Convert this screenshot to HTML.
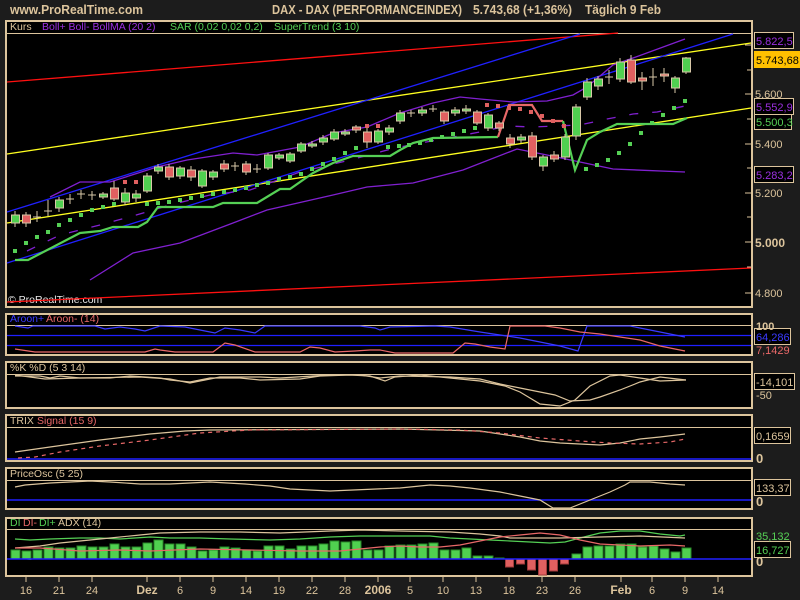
<!DOCTYPE html>
<html><head><meta charset="utf-8"><style>
html,body{margin:0;padding:0;background:#1c1c1c;}
svg{display:block;font-family:"Liberation Sans",sans-serif;}
</style></head><body>
<svg width="800" height="600" viewBox="0 0 800 600" xmlns="http://www.w3.org/2000/svg">
<rect width="800" height="600" fill="#1c1c1c"/>
<g fill="#dcc49c" font-weight="bold" font-size="13">
<text x="10" y="14" textLength="133" lengthAdjust="spacingAndGlyphs">www.ProRealTime.com</text>
<text x="272" y="14" textLength="190" lengthAdjust="spacingAndGlyphs">DAX - DAX (PERFORMANCEINDEX)</text>
<text x="473" y="14" textLength="99" lengthAdjust="spacingAndGlyphs">5.743,68 (+1,36%)</text>
<text x="585" y="14" textLength="76" lengthAdjust="spacingAndGlyphs">Täglich  9 Feb</text>
</g>
<!-- panels -->
<g fill="#000" stroke="#dcc49c" stroke-width="2">
<rect x="6" y="21" width="746" height="286"/>
<rect x="6" y="314" width="746" height="41"/>
<rect x="6" y="362" width="746" height="46"/>
<rect x="6" y="415" width="746" height="46"/>
<rect x="6" y="468" width="746" height="41"/>
<rect x="6" y="518" width="746" height="58"/>
</g>
<g stroke="#dcc49c" stroke-width="1">
<line x1="6" y1="33.5" x2="752" y2="33.5"/>
<line x1="6" y1="325.5" x2="752" y2="325.5"/>
<line x1="6" y1="374.5" x2="752" y2="374.5"/>
<line x1="6" y1="427.5" x2="752" y2="427.5"/>
<line x1="6" y1="480.5" x2="752" y2="480.5"/>
<line x1="6" y1="529.5" x2="752" y2="529.5"/>
</g>
<g font-size="10.5">
<text x="10" y="30" fill="#dcc49c">Kurs</text>
<text x="42" y="30" fill="#9b30e0">Boll+ Boll- BollMA (20 2)</text>
<text x="170" y="30" fill="#55d055">SAR (0,02 0,02 0,2)</text>
<text x="274" y="30" fill="#55d055">SuperTrend (3 10)</text>
<text x="10" y="322" fill="#3a3aff">Aroon+</text>
<text x="46" y="322" fill="#e86868">Aroon- (14)</text>
<text x="10" y="371" fill="#dcc49c">%K %D (5 3 14)</text>
<text x="10" y="424" fill="#dcc49c">TRIX</text>
<text x="37" y="424" fill="#e86868">Signal (15 9)</text>
<text x="10" y="477" fill="#dcc49c">PriceOsc (5 25)</text>
<text x="10" y="526" fill="#55d055">DI</text>
<text x="23" y="526" fill="#e86868">DI-</text>
<text x="39" y="526" fill="#55d055">DI+</text>
<text x="58" y="526" fill="#dcc49c">ADX (14)</text>
<text x="8" y="303" fill="#e8e8e8">© ProRealTime.com</text>
</g>
<!-- main chart lines -->
<g fill="none">
<line x1="7" y1="82" x2="618" y2="33" stroke="#ff1010" stroke-width="1.3"/>
<line x1="7" y1="302" x2="751" y2="268" stroke="#ff1010" stroke-width="1.3"/>
<line x1="7" y1="154" x2="751" y2="43" stroke="#ffff20" stroke-width="1.3"/>
<line x1="7" y1="223" x2="751" y2="108" stroke="#ffff20" stroke-width="1.3"/>
<line x1="7" y1="212" x2="580" y2="34" stroke="#2020ff" stroke-width="1.3"/>
<line x1="7" y1="263" x2="733" y2="34" stroke="#2020ff" stroke-width="1.3"/>
<polyline stroke="#8020d0" stroke-width="1.3" points="50,197 80,182 110,182 157,167 187,160 233,153 257,155 300,147 333,133 367,127 400,113 433,103 460,97 480,99 513,102 547,101 573,95 587,87 613,65 633,58 685,39"/>
<polyline stroke="#8020d0" stroke-width="1.3" points="90,280 133,253 180,243 233,223 267,210 333,195 367,187 390,185 413,183 463,170 517,149 547,155 580,162 613,169 685,172"/>
<polyline stroke="#8020d0" stroke-width="1.3" stroke-dasharray="9,14" points="27,251 60,235 100,225 133,216 170,205 210,195 250,190 300,172 350,160 395,148 437,140 480,132 507,126 533,127 580,125 607,119 633,114 657,112 685,106"/>
<polyline stroke="#55d055" stroke-width="2.2" points="15,260 28,260 80,233 100,231 113,227 138,227 147,222 158,207 213,207 223,203 257,203 280,189 290,189 313,173 333,163 353,156 390,156 400,150 413,143 433,138 498,137"/>
<polyline stroke="#e86868" stroke-width="2.2" points="498,137 509,105 532,105 542,121 563,121"/>
<polyline stroke="#55d055" stroke-width="2.2" points="563,121 575,170 587,140 600,132 617,124 673,124 687,118"/>
</g>
<!-- SAR -->
<g fill="#55d055">
<rect x="13" y="249" width="4" height="4"/><rect x="24" y="241" width="4" height="4"/><rect x="35" y="235" width="4" height="4"/><rect x="46" y="230" width="4" height="4"/><rect x="57" y="223" width="4" height="4"/><rect x="68" y="218" width="4" height="4"/><rect x="79" y="213" width="4" height="4"/><rect x="90" y="208" width="4" height="4"/><rect x="101" y="205" width="4" height="4"/><rect x="112" y="202" width="4" height="4"/>
<rect x="145" y="202" width="4" height="4"/><rect x="156" y="201" width="4" height="4"/><rect x="167" y="200" width="4" height="4"/><rect x="178" y="198" width="4" height="4"/><rect x="189" y="196" width="4" height="4"/><rect x="200" y="194" width="4" height="4"/><rect x="211" y="192" width="4" height="4"/><rect x="222" y="190" width="4" height="4"/><rect x="233" y="188" width="4" height="4"/><rect x="244" y="186" width="4" height="4"/><rect x="255" y="183" width="4" height="4"/><rect x="266" y="181" width="4" height="4"/><rect x="277" y="177" width="4" height="4"/><rect x="288" y="175" width="4" height="4"/><rect x="299" y="172" width="4" height="4"/><rect x="310" y="167" width="4" height="4"/><rect x="321" y="162" width="4" height="4"/><rect x="332" y="157" width="4" height="4"/><rect x="343" y="151" width="4" height="4"/><rect x="354" y="146" width="4" height="4"/>
<rect x="386" y="145" width="4" height="4"/><rect x="397" y="144" width="4" height="4"/><rect x="407" y="143" width="4" height="4"/><rect x="418" y="141" width="4" height="4"/><rect x="429" y="138" width="4" height="4"/><rect x="440" y="135" width="4" height="4"/><rect x="451" y="132" width="4" height="4"/><rect x="462" y="129" width="4" height="4"/><rect x="473" y="126" width="4" height="4"/>
<rect x="584" y="167" width="4" height="4"/><rect x="595" y="163" width="4" height="4"/><rect x="606" y="158" width="4" height="4"/><rect x="617" y="151" width="4" height="4"/><rect x="628" y="142" width="4" height="4"/><rect x="639" y="131" width="4" height="4"/><rect x="650" y="121" width="4" height="4"/><rect x="661" y="113" width="4" height="4"/><rect x="672" y="106" width="4" height="4"/><rect x="683" y="99" width="4" height="4"/>
</g>
<g fill="#e06060">
<rect x="123" y="180" width="4" height="4"/><rect x="134" y="180" width="4" height="4"/><rect x="365" y="124" width="4" height="4"/><rect x="376" y="124" width="4" height="4"/>
<rect x="485" y="103" width="4" height="4"/><rect x="496" y="104" width="4" height="4"/><rect x="507" y="106" width="4" height="4"/><rect x="518" y="107" width="4" height="4"/><rect x="529" y="110" width="4" height="4"/><rect x="540" y="114" width="4" height="4"/><rect x="551" y="119" width="4" height="4"/><rect x="562" y="124" width="4" height="4"/>
</g>
<!-- candles -->
<g stroke="#d8c8a8" stroke-width="1">
<path d="M15 211V227M26 212V227M37 211V222M48 200V216M59 197V212M70 194V204M81 190V199M92 191V200M103 192V199M114 181V201M125 188V205M136 190V202M147 173V193M158 164V174M169 164V180M180 166V179M191 166V181M202 169V188M213 170V180M224 160V172M235 162V171M246 161V175M257 164V173M268 153V170M279 153V160M290 152V163M301 142V153M312 141V148M323 135V145M334 129V141M345 129V136M356 125V133M367 128V148M378 129V144M389 125V135M400 110V124M411 110V117M422 107V116M433 105V112M444 110V124M455 107V116M466 105V114M477 110V125M488 113V131M499 121V131M510 134V148M521 134V143M532 132V160M543 155V171M554 151V162M565 134V160M576 104V140M587 78V100M598 76V90M609 70V84M620 58V82M631 55V84M642 72V90M653 68V86M664 68V82M675 76V93M686 57V74" fill="none"/>
<g fill="#50d050">
<rect x="11.5" y="215" width="8" height="8"/><rect x="55.5" y="200" width="8" height="8"/><rect x="99.5" y="194" width="8" height="3"/><rect x="121.5" y="193" width="8" height="9"/><rect x="132.5" y="194" width="8" height="4"/><rect x="143.5" y="176" width="8" height="15"/><rect x="154.5" y="167" width="8" height="4"/><rect x="176.5" y="168" width="8" height="8"/><rect x="198.5" y="171" width="8" height="15"/><rect x="209.5" y="172" width="8" height="5"/><rect x="264.5" y="155" width="8" height="13"/><rect x="275.5" y="155" width="8" height="3"/><rect x="286.5" y="154" width="8" height="7"/><rect x="297.5" y="144" width="8" height="7"/><rect x="308.5" y="144" width="8" height="2"/><rect x="319.5" y="138" width="8" height="4"/><rect x="330.5" y="132" width="8" height="7"/><rect x="341.5" y="132" width="8" height="2"/><rect x="374.5" y="131" width="8" height="11"/><rect x="385.5" y="128" width="8" height="4"/><rect x="396.5" y="113" width="8" height="8"/><rect x="418.5" y="110" width="8" height="3"/><rect x="451.5" y="110" width="8" height="3"/><rect x="462.5" y="109" width="8" height="2"/><rect x="484.5" y="115" width="8" height="13"/><rect x="517.5" y="137" width="8" height="3"/><rect x="539.5" y="157" width="8" height="9"/><rect x="561.5" y="137" width="8" height="20"/><rect x="572.5" y="107" width="8" height="29"/><rect x="583.5" y="82" width="8" height="15"/><rect x="594.5" y="79" width="8" height="7"/><rect x="616.5" y="62" width="8" height="17"/><rect x="671.5" y="78" width="8" height="10"/><rect x="682.5" y="58" width="8" height="14"/>
</g>
<g fill="#e06060">
<rect x="22.5" y="215" width="8" height="8"/><rect x="110.5" y="188" width="8" height="11"/><rect x="165.5" y="167" width="8" height="10"/><rect x="187.5" y="170" width="8" height="7"/><rect x="220.5" y="164" width="8" height="5"/><rect x="242.5" y="164" width="8" height="8"/><rect x="352.5" y="127" width="8" height="3"/><rect x="363.5" y="132" width="8" height="10"/><rect x="440.5" y="112" width="8" height="9"/><rect x="473.5" y="112" width="8" height="11"/><rect x="495.5" y="123" width="8" height="5"/><rect x="506.5" y="138" width="8" height="6"/><rect x="528.5" y="136" width="8" height="21"/><rect x="550.5" y="155" width="8" height="4"/><rect x="627.5" y="60" width="8" height="22"/><rect x="638.5" y="78" width="8" height="3"/><rect x="660.5" y="74" width="8" height="2"/>
</g>
<path d="M33 217H41M44 211H52M66 199H74M77 194H85M88 195H96M231 166H239M253 169H261M407 113H415M429 109H437M605 77H613M649 77H657" fill="none"/>
</g>
<!-- right axis main -->
<g stroke="#dcc49c"><path d="M745 45H751M747 70H751M745 94H751M747 119H751M745 144H751M747 168H751M745 193H751M747 217H751M745 242H751M747 267H751M745 293H751"/></g>
<g font-size="11" fill="#dcc49c">
<text x="755" y="98">5.600</text><text x="755" y="148">5.400</text><text x="755" y="197">5.200</text><text x="755" y="247" font-weight="bold" font-size="12">5.000</text><text x="755" y="297">4.800</text>
</g>
<g stroke="#dcc49c" fill="#000">
<rect x="754.5" y="32.5" width="39" height="16"/><rect x="754.5" y="98.5" width="39" height="16"/><rect x="754.5" y="114.5" width="37" height="15"/><rect x="754.5" y="166.5" width="39" height="16"/>
<rect x="754.5" y="328.5" width="36" height="16"/><rect x="754.5" y="373.5" width="40" height="16"/><rect x="754.5" y="427.5" width="36" height="16"/><rect x="754.5" y="479.5" width="36" height="16"/><rect x="754.5" y="541.5" width="36" height="16"/>
</g>
<rect x="754" y="51" width="46" height="17" fill="#ffc000"/>
<g font-size="11">
<text x="756" y="45" fill="#9b30e0">5.822,5</text>
<text x="756" y="64" fill="#000">5.743,68</text>
<text x="756" y="111" fill="#9b30e0">5.552,9</text>
<text x="756" y="126" fill="#55d055">5.500,3</text>
<text x="756" y="179" fill="#9b30e0">5.283,2</text>
<text x="756" y="330" fill="#dcc49c" font-weight="bold">100</text>
<text x="756" y="341" fill="#3a3aff">64,286</text>
<text x="756" y="354" fill="#e86868">7,1429</text>
<text x="756" y="386" fill="#dcc49c">-14,101</text>
<text x="756" y="399" fill="#dcc49c">-50</text>
<text x="756" y="440" fill="#dcc49c">0,1659</text>
<text x="756" y="463" fill="#dcc49c" font-weight="bold" font-size="13">0</text>
<text x="756" y="492" fill="#dcc49c">133,37</text>
<text x="756" y="506" fill="#dcc49c" font-weight="bold" font-size="13">0</text>
<text x="756" y="540" fill="#55d055">35,132</text>
<text x="756" y="554" fill="#55d055">16,727</text>
<text x="756" y="566" fill="#dcc49c" font-weight="bold" font-size="13">0</text>
</g>
<!-- Aroon -->
<g fill="none" stroke-width="1.2">
<line x1="7" y1="335.5" x2="751" y2="335.5" stroke="#2020ff"/>
<line x1="7" y1="345.5" x2="751" y2="345.5" stroke="#2020ff"/>
<polyline stroke="#3a3aff" points="15,326 28,328 33,326 95,326 105,329 120,327 135,329 145,331 160,326 185,327 210,332 215,333 225,328 240,330 255,333 265,326 360,326 375,328 380,330 390,327 435,326 450,327 480,332 500,335 520,338 540,342 560,346 578,351 587,326 630,326 640,328 660,332 685,337"/>
<polyline stroke="#e86868" points="15,349 35,352 145,352 155,349 160,350 175,352 213,352 225,343 235,345 255,352 300,352 310,347 320,348 335,352 355,351 370,350 380,350 395,353 453,353 465,343 475,344 490,347 505,349 510,326 545,326 560,328 580,332 600,334 620,337 640,340 660,346 685,351"/>
</g>
<!-- %K -->
<g fill="none" stroke="#dcc49c" stroke-width="1.2">
<polyline points="15,375 30,377 45,379 80,378 110,378 130,376 160,378 170,380 190,382 210,378 240,378 260,380 300,379 320,376 350,375 370,376 385,381 395,377 420,375 450,378 480,381 505,386 520,392 540,404 560,406 575,400 590,386 610,376 620,375 640,378 660,381 686,380"/>
<polyline points="15,376 40,376 50,378 60,376 80,378 140,377 170,379 190,383 205,380 220,377 260,377 280,378 330,375 360,375 380,378 400,376 450,377 480,379 500,384 520,388 540,392 555,395 570,401 590,400 600,397 620,390 640,382 660,377 686,380"/>
</g>
<!-- TRIX -->
<line x1="7" y1="459" x2="751" y2="459" stroke="#2020ff" stroke-width="1.5"/>
<polyline fill="none" stroke="#dcc49c" stroke-width="1.2" points="15,452 50,447 100,440 150,434 185,431 210,430 400,429 480,431 500,434 520,437 540,441 560,443 600,445 620,443 640,439 660,437 685,434"/>
<polyline fill="none" stroke="#e86868" stroke-width="1.2" stroke-dasharray="4,4" points="18,458 35,457 60,452 100,446 150,440 200,433 250,430 400,429 460,430 500,433 540,438 580,441 610,443 640,444 670,442 685,439"/>
<!-- PriceOsc -->
<line x1="7" y1="500" x2="751" y2="500" stroke="#2020ff" stroke-width="1.5"/>
<polyline fill="none" stroke="#dcc49c" stroke-width="1.2" points="15,487 25,485 50,483 90,481 110,482 140,484 170,484 210,482 245,484 270,486 290,489 330,491 400,488 430,485 450,486 470,488 500,492 520,496 540,500 553,508 570,508 590,500 610,492 625,485 630,482 650,482 670,484 685,485"/>
<!-- DI bars -->
<g fill="#50d050" stroke="#2a8a2a" stroke-width="1">
<path d="M11 559V550h9v9M22 559V551h9v9M33 559V550h9v9M44 559V547h9v12M55 559V548h9v11M66 559V548h9v11M77 559V546h9v13M88 559V547h9v12M99 559V547h9v12M110 559V544h9v15M121 559V547h9v12M132 559V547h9v12M143 559V543h9v16M154 559V540h9v19M165 559V544h9v15M176 559V544h9v15M187 559V547h9v12M198 559V551h9v8M209 559V550h9v9M220 559V547h9v12M231 559V548h9v11M242 559V550h9v9M253 559V551h9v8M264 559V546h9v13M275 559V546h9v13M286 559V549h9v10M297 559V546h9v13M308 559V546h9v13M319 559V544h9v15M330 559V541h9v18M341 559V542h9v17M352 559V541h9v18M363 559V550h9v9M374 559V550h9v9M385 559V546h9v13M396 559V545h9v14M407 559V545h9v14M418 559V544h9v15M429 559V543h9v16M440 559V550h9v9M451 559V550h9v9M462 559V548h9v11M473 559V556h9v3M484 559V556h9v3M495 559V558h9v1M572 559V554h9v5M583 559V547h9v12M594 559V546h9v13M605 559V546h9v13M616 559V544h9v15M627 559V544h9v15M638 559V547h9v12M649 559V546h9v13M660 559V549h9v10M671 559V552h9v7M682 559V548h9v11"/>
</g>
<g fill="#e06060" stroke="#a03a3a"><rect x="505.5" y="559" width="8" height="8"/><rect x="516.5" y="559" width="8" height="5"/><rect x="527.5" y="559" width="8" height="11"/><rect x="538.5" y="559" width="8" height="16"/><rect x="549.5" y="559" width="8" height="12"/><rect x="560.5" y="559" width="8" height="5"/></g>
<line x1="7" y1="559" x2="751" y2="559" stroke="#2020ff" stroke-width="1.5"/>
<g fill="none" stroke-width="1.2">
<polyline stroke="#55d055" points="15,539 30,540 50,539 80,538 100,538 120,539 150,537 170,538 200,538 230,539 270,540 300,539 330,537 360,536 400,536 430,536 450,538 470,539 490,540 510,541 530,542 550,543 565,542 580,538 600,533 620,531 640,531 660,534 680,536 685,535"/>
<polyline stroke="#dcc49c" points="15,548 40,546 60,543 90,540 110,538 140,535 160,533 200,532 240,532 280,533 330,531 360,530 400,531 450,532 480,534 500,536 510,538 560,538 600,537 640,536 685,538"/>
<polyline stroke="#e86868" points="15,548 40,548 80,551 120,550 150,551 200,549 250,550 300,551 340,551 380,547 400,546 420,547 440,547 460,545 480,541 500,537 520,535 540,533 560,535 580,540 600,544 640,546 670,545 685,546"/>
</g>
<!-- x axis -->
<g stroke="#dcc49c"><path d="M26 577V582M59 577V582M92 577V582M147 577V582M180 577V582M213 577V582M246 577V582M279 577V582M312 577V582M345 577V582M378 577V582M410 577V582M443 577V582M476 577V582M509 577V582M542 577V582M575 577V582M621 577V582M652 577V582M685 577V582M718 577V582"/></g>
<g font-size="11" fill="#dcc49c" text-anchor="middle">
<text x="26" y="594">16</text><text x="59" y="594">21</text><text x="92" y="594">24</text><text x="147" y="594" font-weight="bold" font-size="12">Dez</text><text x="180" y="594">6</text><text x="213" y="594">9</text><text x="246" y="594">14</text><text x="279" y="594">19</text><text x="312" y="594">22</text><text x="345" y="594">28</text><text x="378" y="594" font-weight="bold" font-size="12">2006</text><text x="410" y="594">5</text><text x="443" y="594">10</text><text x="476" y="594">13</text><text x="509" y="594">18</text><text x="542" y="594">23</text><text x="575" y="594">26</text><text x="621" y="594" font-weight="bold" font-size="12">Feb</text><text x="652" y="594">6</text><text x="685" y="594">9</text><text x="718" y="594">14</text>
</g>
</svg>
</body></html>
